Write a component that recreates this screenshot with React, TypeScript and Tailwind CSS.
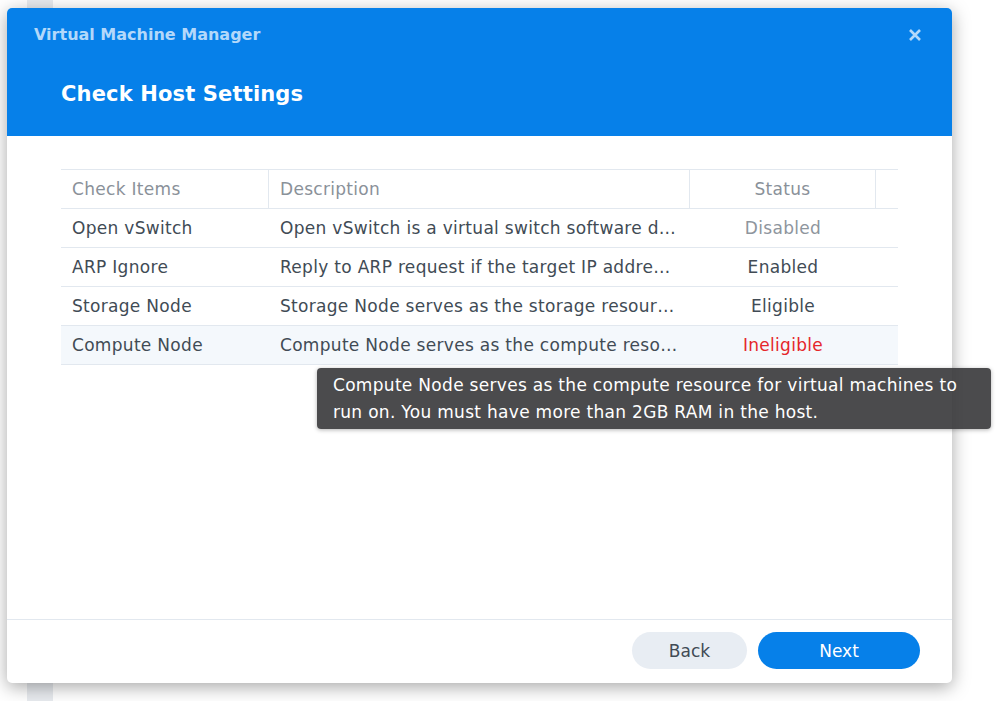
import React from "react";

const rows = [
  { item: "Open vSwitch", desc: "Open vSwitch is a virtual switch software d…", status: "Disabled", color: "text-[#8e959d]" },
  { item: "ARP Ignore", desc: "Reply to ARP request if the target IP addre…", status: "Enabled", color: "text-[#414b55]" },
  { item: "Storage Node", desc: "Storage Node serves as the storage resour…", status: "Eligible", color: "text-[#414b55]" },
  { item: "Compute Node", desc: "Compute Node serves as the compute reso…", status: "Ineligible", color: "text-[#e5262b]", hover: true },
];

export default function App() {
  return (
    <div className="relative w-[1000px] h-[701px] overflow-hidden bg-white font-['DejaVu_Sans',Verdana,sans-serif]">
      <div className="absolute left-[27px] top-0 w-[26px] h-[701px] bg-[#e8ebef]" />
      <div className="relative pl-[7px] pt-[8px]">
        <div className="w-[945px] h-[675px] rounded-[5px] bg-white shadow-[0_4px_18px_rgba(0,0,0,0.35)] flex flex-col overflow-hidden">
          <div className="h-[128px] bg-[#0680e9] flex flex-col">
            <div className="h-[54px] flex items-center justify-between pl-[27px] pr-[30px]">
              <span className="text-[16px] font-bold text-[#b3d8fa]">Virtual Machine Manager</span>
              <svg width="14" height="14" viewBox="0 0 14 14">
                <path d="M2 2 L12 12 M12 2 L2 12" stroke="#b3d8fa" strokeWidth="2.6" strokeLinecap="butt" />
              </svg>
            </div>
            <div className="pl-[54px] pt-[17px] text-[21px] font-bold text-white tracking-[0.15px]">Check Host Settings</div>
          </div>
          <div className="flex-1 px-[54px] pt-[33px]">
            <div className="border-t border-[#e2e8ef] text-[17px] tracking-[0.3px]">
              <div className="flex h-[39px] items-center border-b border-[#e2e8ef] text-[#8a9199]">
                <div className="w-[208px] h-full flex items-center pl-[11px] pt-[2px] border-r border-[#e2e8ef]">Check Items</div>
                <div className="w-[421px] h-full flex items-center pl-[11px] pt-[2px] border-r border-[#e2e8ef]">Description</div>
                <div className="w-[186px] h-full flex items-center justify-center pt-[2px] border-r border-[#e2e8ef]">Status</div>
                <div className="flex-1 h-full" />
              </div>
              {rows.map((r) => (
                <div key={r.item} className={`flex h-[39px] items-center pt-[2px] border-b border-[#e2e8ef] ${r.hover ? "bg-[#f4f8fc]" : ""}`}>
                  <div className="w-[208px] pl-[11px] text-[#414b55] whitespace-nowrap">{r.item}</div>
                  <div className="w-[421px] pl-[11px] text-[#414b55] whitespace-nowrap">{r.desc}</div>
                  <div className={`w-[186px] text-center ${r.color}`}>{r.status}</div>
                </div>
              ))}
            </div>
          </div>
          <div className="h-[64px] border-t border-[#e2e8ef] flex items-start justify-end pt-[12px] pr-[32px] gap-[11px]">
            <button className="w-[115px] h-[37px] pt-[2px] rounded-full bg-[#e8edf3] text-[#414b55] text-[17px]">Back</button>
            <button className="w-[162px] h-[37px] pt-[2px] rounded-full bg-[#0680e9] text-white text-[17px]">Next</button>
          </div>
        </div>
      </div>
      <div className="absolute left-[317px] top-[368px] w-[674px] h-[61px] rounded-[4px] bg-[rgba(55,55,58,0.9)] shadow-[0_1px_4px_rgba(0,0,0,0.3)] pl-[16px] pt-[4px] text-white text-[17px] leading-[27px] tracking-[0.3px]">
        <div>Compute Node serves as the compute resource for virtual machines to</div>
        <div>run on. You must have more than 2GB RAM in the host.</div>
      </div>
    </div>
  );
}
